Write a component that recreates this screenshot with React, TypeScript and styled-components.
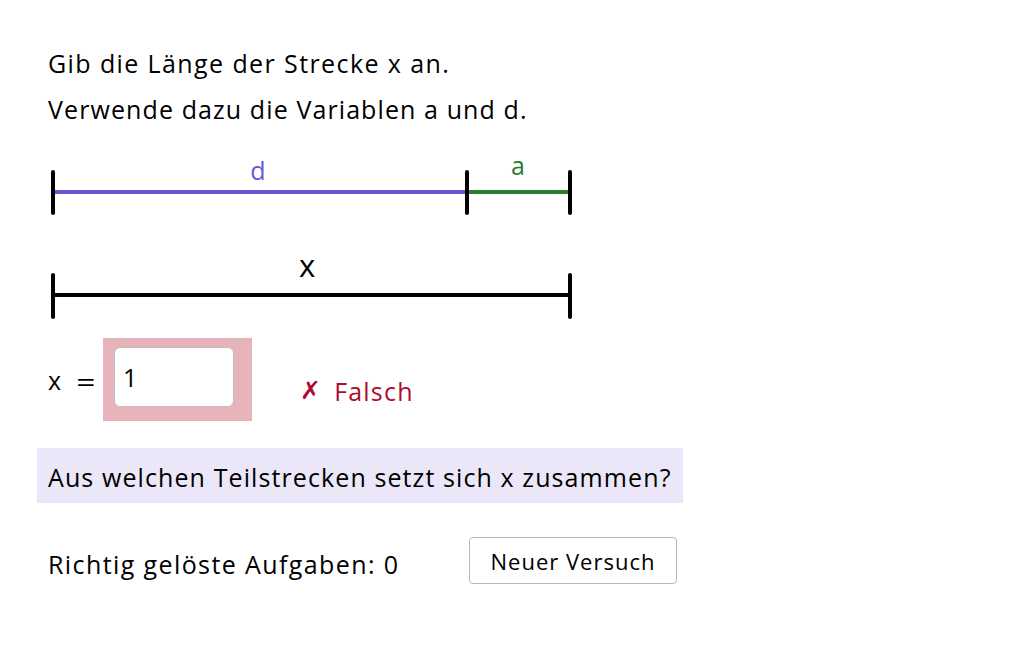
import { FC } from 'react';
import styled, { createGlobalStyle } from 'styled-components';

const GlobalStyle = createGlobalStyle`
    html, body {
        margin: 0;
        padding: 0;
        background: #ffffff;
    }
    body {
        font-family: 'Open Sans', 'Liberation Sans', Arial, sans-serif;
        color: #000000;
    }
`;

const Page = styled.div`
    width: 1032px;
    height: 645px;
    box-sizing: border-box;
    padding: 40px 0 0 48px;
    display: flex;
    flex-direction: column;
    font-size: 25px;
    letter-spacing: 1.2px;
`;

const Prompt = styled.p<{ $spacing?: number }>`
    margin: 0;
    line-height: 46px;
    white-space: nowrap;
    letter-spacing: ${p => p.$spacing ?? 1.2}px;
`;

const Diagram = styled.svg`
    display: block;
    margin-top: 8px;
    overflow: visible;
    letter-spacing: 0;
`;

const AnswerRow = styled.div`
    display: flex;
    align-items: center;
    margin-top: 13px;
    height: 83px;
`;

const VarLabel = styled.span`
    width: 55px;
    display: flex;
    align-items: center;
    gap: 16px;
    line-height: 1;
    margin-top: 2px;
`;

const Equals = styled.span`
    font-size: 28px;
    transform: scaleX(1.2);
`;

const ResultFrame = styled.div<{ $state: 'wrong' | 'right' | 'idle' }>`
    width: 149px;
    height: 83px;
    box-sizing: border-box;
    padding: 9px 18px 14px 11px;
    background: ${p => p.$state === 'wrong' ? '#e8b4bc' : p.$state === 'right' ? '#b6dfb8' : 'transparent'};
`;

const AnswerInput = styled.div`
    height: 100%;
    box-sizing: border-box;
    background: #ffffff;
    border: 1px solid #bdbdbd;
    border-radius: 6px;
    padding-left: 8px;
    display: flex;
    align-items: center;
`;

const Feedback = styled.span<{ $ok: boolean }>`
    margin: 22px 0 0 48px;
    color: ${p => p.$ok ? '#2e7d32' : '#b00a2f'};
    display: flex;
    align-items: center;
    gap: 12px;
`;

const Mark = styled.span`
    font-family: 'DejaVu Sans', sans-serif;
    font-weight: bold;
    font-size: 25px;
`;

const Hint = styled.div`
    margin: 27px 0 0 -11px;
    width: 646px;
    height: 55px;
    box-sizing: border-box;
    padding: 2px 0 0 11px;
    background: #ebe7f8;
    display: flex;
    align-items: center;
    white-space: nowrap;
    letter-spacing: 1.1px;
`;

const Footer = styled.div`
    display: grid;
    grid-template-columns: 421px auto;
    align-items: center;
    margin-top: 34px;
`;

const Score = styled.span`
    margin-top: 7px;
    white-space: nowrap;
    letter-spacing: 1.4px;
`;

const RetryButton = styled.button`
    width: 208px;
    height: 47px;
    box-sizing: border-box;
    background: #ffffff;
    border: 1px solid #b8b8b8;
    border-radius: 4px;
    font-family: inherit;
    font-size: 22px;
    letter-spacing: 1px;
    color: #000000;
    padding: 0;
    cursor: pointer;
`;

const LABEL_FONT = 'Open Sans, Liberation Sans, sans-serif';

const Tick: FC<{ x: number; y1: number; y2: number }> = ({x, y1, y2}) =>
    <line x1={x} x2={x} y1={y1} y2={y2} stroke="#000" strokeWidth={4} strokeLinecap="round"/>;

const App: FC = () => {
    return <>
        <GlobalStyle/>
        <Page>
            <Prompt $spacing={1.4}>Gib die Länge der Strecke x an.</Prompt>
            <Prompt $spacing={1.1}>Verwende dazu die Variablen a und d.</Prompt>

            <Diagram width={530} height={185} viewBox="0 0 530 185">
                {/* d + a */}
                <line x1={5} x2={419} y1={52} y2={52} stroke="#6658d4" strokeWidth={4}/>
                <line x1={419} x2={522} y1={52} y2={52} stroke="#2e7b32" strokeWidth={4}/>
                <Tick x={5} y1={32} y2={73}/>
                <Tick x={419} y1={32} y2={73}/>
                <Tick x={522} y1={32} y2={73}/>
                <text x={210} y={40} fill="#6658d4" fontSize={25} textAnchor="middle"
                      fontFamily={LABEL_FONT}>d</text>
                <text x={470} y={35} fill="#2e7b32" fontSize={25} textAnchor="middle"
                      fontFamily={LABEL_FONT}>a</text>

                {/* x */}
                <line x1={5} x2={522} y1={155} y2={155} stroke="#000" strokeWidth={4}/>
                <Tick x={5} y1={135} y2={177}/>
                <Tick x={522} y1={135} y2={177}/>
                <text x={259} y={137} fill="#000" fontSize={31} textAnchor="middle"
                      fontFamily={LABEL_FONT}>x</text>
            </Diagram>

            <AnswerRow>
                <VarLabel>x <Equals>=</Equals></VarLabel>
                <ResultFrame $state="wrong">
                    <AnswerInput>1</AnswerInput>
                </ResultFrame>
                <Feedback $ok={false}><Mark>✗</Mark>Falsch</Feedback>
            </AnswerRow>

            <Hint>Aus welchen Teilstrecken setzt sich x zusammen?</Hint>

            <Footer>
                <Score>Richtig gelöste Aufgaben: 0</Score>
                <RetryButton>Neuer Versuch</RetryButton>
            </Footer>
        </Page>
    </>;
};

export default App;
